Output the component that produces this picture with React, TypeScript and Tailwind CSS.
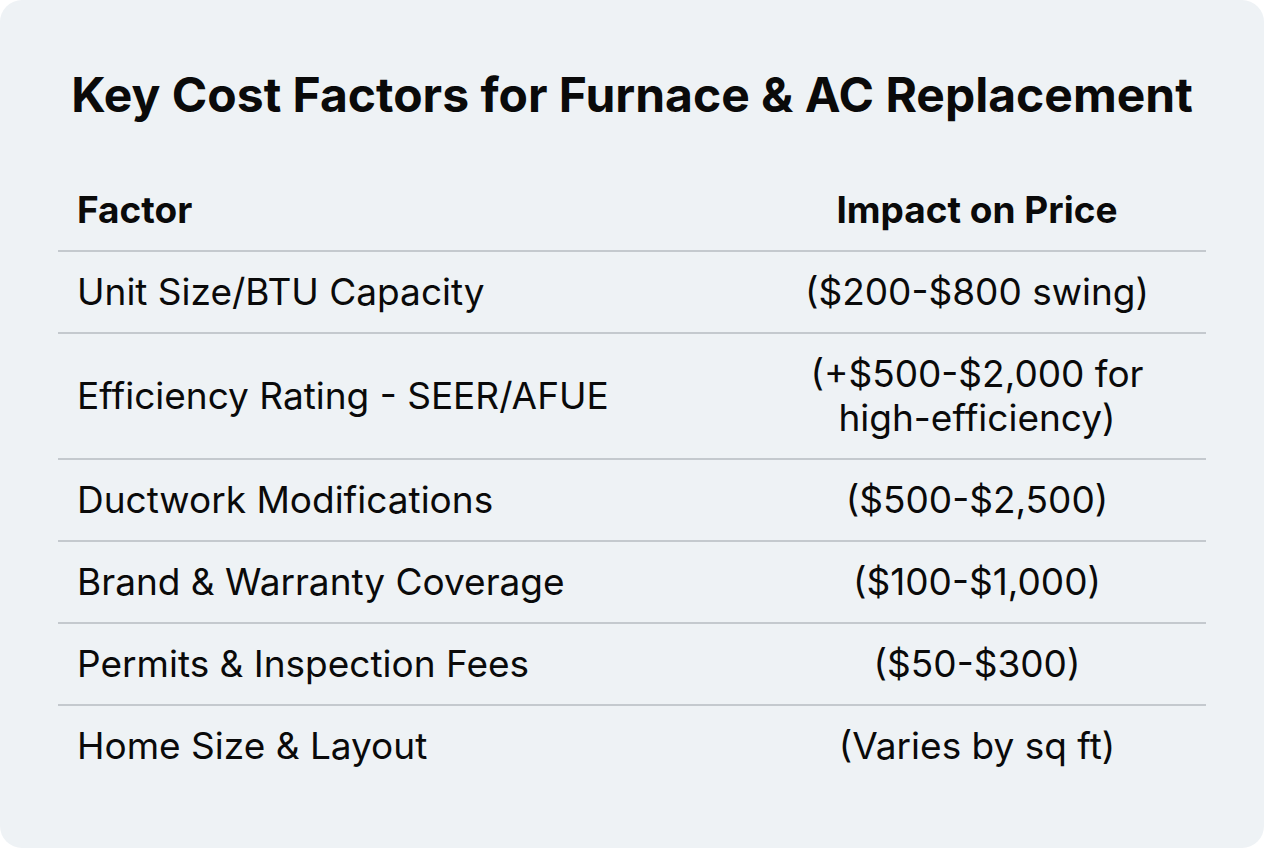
const rows: { factor: string; impact: string[] }[] = [
  { factor: "Unit Size/BTU Capacity", impact: ["($200-$800 swing)"] },
  { factor: "Efficiency Rating - SEER/AFUE", impact: ["(+$500-$2,000 for", "high-efficiency)"] },
  { factor: "Ductwork Modifications", impact: ["($500-$2,500)"] },
  { factor: "Brand & Warranty Coverage", impact: ["($100-$1,000)"] },
  { factor: "Permits & Inspection Fees", impact: ["($50-$300)"] },
  { factor: "Home Size & Layout", impact: ["(Varies by sq ft)"] },
];

export default function App() {
  return (
    <div className="w-[1264px] h-[848px] bg-white font-['Inter',sans-serif] text-[#0a0a0a]">
      <div className="h-full rounded-[22px] bg-[#eef2f5] px-[58px] pt-[66px]">
        <h1 className="text-center text-[48px] leading-[58px] font-bold">
          Key Cost Factors for Furnace &amp; AC Replacement
        </h1>

        <div className="mt-[46px]">
          <div className="flex border-b-2 border-[#c4c9ce]">
            <div className="w-[690px] pl-[19px] py-[18px] text-[37px] leading-[44px] font-bold">Factor</div>
            <div className="flex-1 py-[18px] text-center text-[37px] leading-[44px] font-bold">
              Impact on Price
            </div>
          </div>
          {rows.map((row, i) => (
            <div
              key={row.factor}
              className={`flex items-center ${i < rows.length - 1 ? "border-b-2 border-[#c4c9ce]" : ""}`}
            >
              <div className="w-[690px] pl-[19px] py-[18px] text-[37px] leading-[44px]">{row.factor}</div>
              <div className="flex-1 py-[18px] text-center text-[37px] leading-[44px]">
                {row.impact.map((line) => (
                  <div key={line}>{line}</div>
                ))}
              </div>
            </div>
          ))}
        </div>
      </div>
    </div>
  );
}
